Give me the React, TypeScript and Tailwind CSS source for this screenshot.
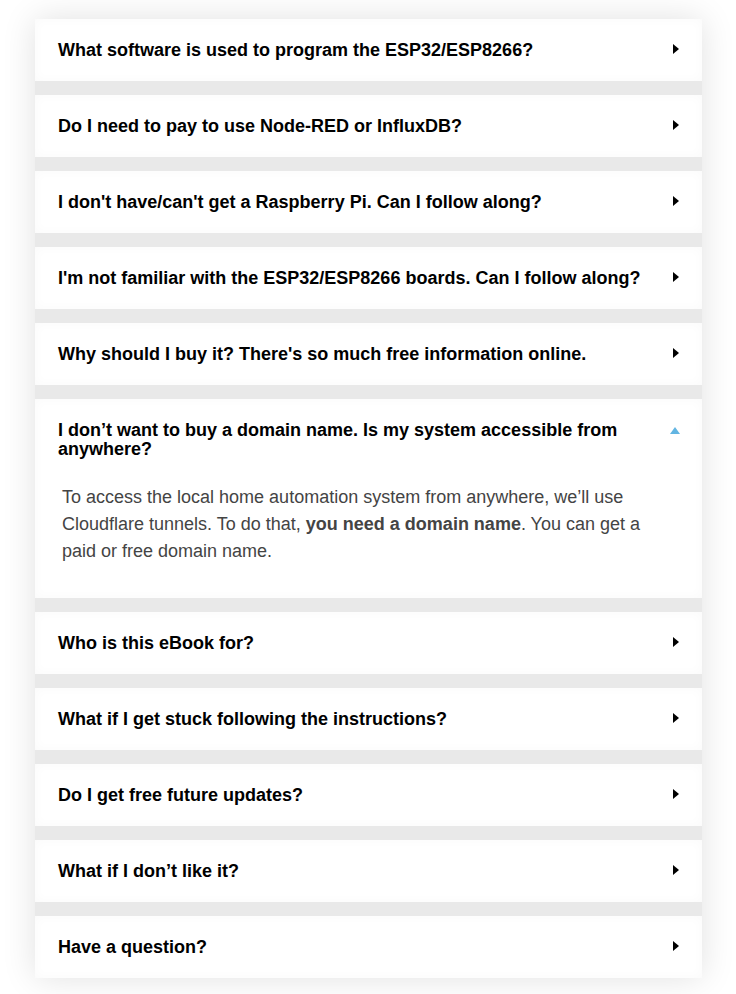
import React, { useState } from 'react';

interface FaqItem {
  q: string;
  a?: React.ReactNode;
}

const faqs: FaqItem[] = [
  { q: 'What software is used to program the ESP32/ESP8266?' },
  { q: 'Do I need to pay to use Node-RED or InfluxDB?' },
  { q: "I don't have/can't get a Raspberry Pi. Can I follow along?" },
  { q: "I'm not familiar with the ESP32/ESP8266 boards. Can I follow along?" },
  { q: "Why should I buy it? There's so much free information online." },
  {
    q: 'I don’t want to buy a domain name. Is my system accessible from anywhere?',
    a: (
      <>
        To access the local home automation system from anywhere, we’ll use Cloudflare tunnels. To do that,{' '}
        <strong className="font-bold">you need a domain name</strong>. You can get a paid or free domain name.
      </>
    ),
  },
  { q: 'Who is this eBook for?' },
  { q: 'What if I get stuck following the instructions?' },
  { q: 'Do I get free future updates?' },
  { q: 'What if I don’t like it?' },
  { q: 'Have a question?' },
];

const App: React.FC = () => {
  const [open, setOpen] = useState<number | null>(5);

  return (
    <div
      className="min-h-[994px] bg-white pt-[19px] pl-[35px]"
      style={{ fontFamily: '"Liberation Sans", Arial, sans-serif' }}
    >
      <div className="w-[667px] flex flex-col gap-[14px] bg-[#e9e9e9] shadow-[0_0_32px_rgba(0,0,0,0.12)]">
        {faqs.map((item, i) => {
          const isOpen = open === i;
          return (
            <div key={i} className="bg-white shadow-[inset_0_0_12px_rgba(0,0,0,0.025)]">
              <button
                onClick={() => setOpen(isOpen ? null : i)}
                className="w-full flex items-start text-left pl-[23px] pr-[22px] pt-[22px] pb-[21px] cursor-pointer"
              >
                <span className="flex-1 text-[18px] leading-[19px] font-bold text-black">{item.q}</span>
                {isOpen ? (
                  <span className="ml-[20px] mt-[6px] w-0 h-0 border-l-[5.5px] border-r-[5.5px] border-b-[7px] border-l-transparent border-r-transparent border-b-[#62b5e2]" />
                ) : (
                  <span className="ml-[20px] mr-[1px] mt-[3px] w-0 h-0 border-t-[5px] border-b-[5px] border-l-[6px] border-t-transparent border-b-transparent border-l-black" />
                )}
              </button>
              {isOpen && item.a && (
                <div className="pl-[27px] pr-[27px] pt-[4px] pb-[33px] text-[18px] leading-[27px] text-[#444]">
                  {item.a}
                </div>
              )}
            </div>
          );
        })}
      </div>
    </div>
  );
};

export default App;
